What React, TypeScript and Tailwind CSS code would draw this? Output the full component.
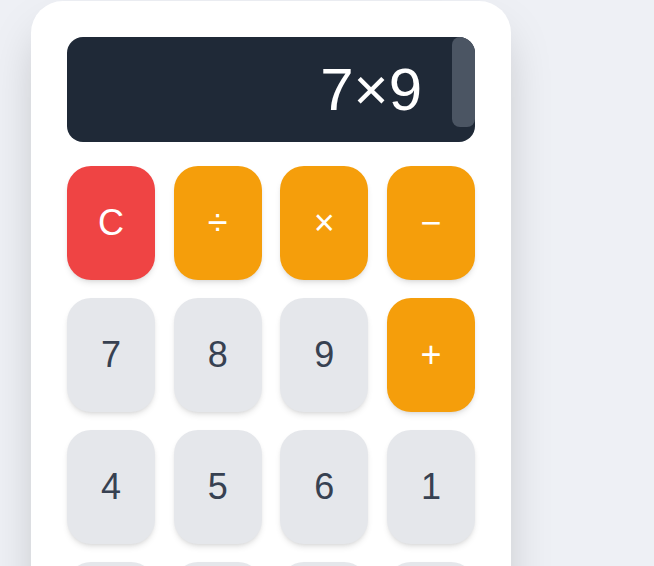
import React, { useState } from 'react';

type Key = { label: string; kind: 'clear' | 'op' | 'num' };

const keys: Key[] = [
  { label: 'C', kind: 'clear' },
  { label: '÷', kind: 'op' },
  { label: '×', kind: 'op' },
  { label: '−', kind: 'op' },
  { label: '7', kind: 'num' },
  { label: '8', kind: 'num' },
  { label: '9', kind: 'num' },
  { label: '+', kind: 'op' },
  { label: '4', kind: 'num' },
  { label: '5', kind: 'num' },
  { label: '6', kind: 'num' },
  { label: '1', kind: 'num' },
  { label: '2', kind: 'num' },
  { label: '3', kind: 'num' },
  { label: '0', kind: 'num' },
  { label: '.', kind: 'num' },
];

const kindClass: Record<Key['kind'], string> = {
  clear: 'bg-[#ef4444] text-white',
  op: 'bg-[#f59e0b] text-white',
  num: 'bg-[#e5e7eb] text-[#374151]',
};

export default function App() {
  const [expr] = useState('7×9');

  return (
    <div className="min-h-screen bg-[#eef0f5] pl-[31px] pt-px font-['Liberation_Sans',Arial,sans-serif]">
      <div className="w-[480px] rounded-[32px] bg-white p-9 shadow-2xl">
        {/* pantalla */}
        <div className="relative mb-6 flex h-[105px] items-center justify-end overflow-hidden rounded-2xl bg-[#1f2937] pr-[53px]">
          <span className="text-6xl leading-none text-white">{expr}</span>
          <div className="absolute right-0 top-0 h-[90px] w-[23px] rounded-lg bg-[#4b5563]"></div>
        </div>

        {/* teclado */}
        <div className="grid grid-cols-4 gap-x-[18.5px] gap-y-[18px]">
          {keys.map((k) => (
            <button
              key={k.label}
              className={`flex h-[114px] items-center justify-center rounded-3xl text-4xl shadow-md ${kindClass[k.kind]}`}
            >
              {k.label}
            </button>
          ))}
        </div>
      </div>
    </div>
  );
}
